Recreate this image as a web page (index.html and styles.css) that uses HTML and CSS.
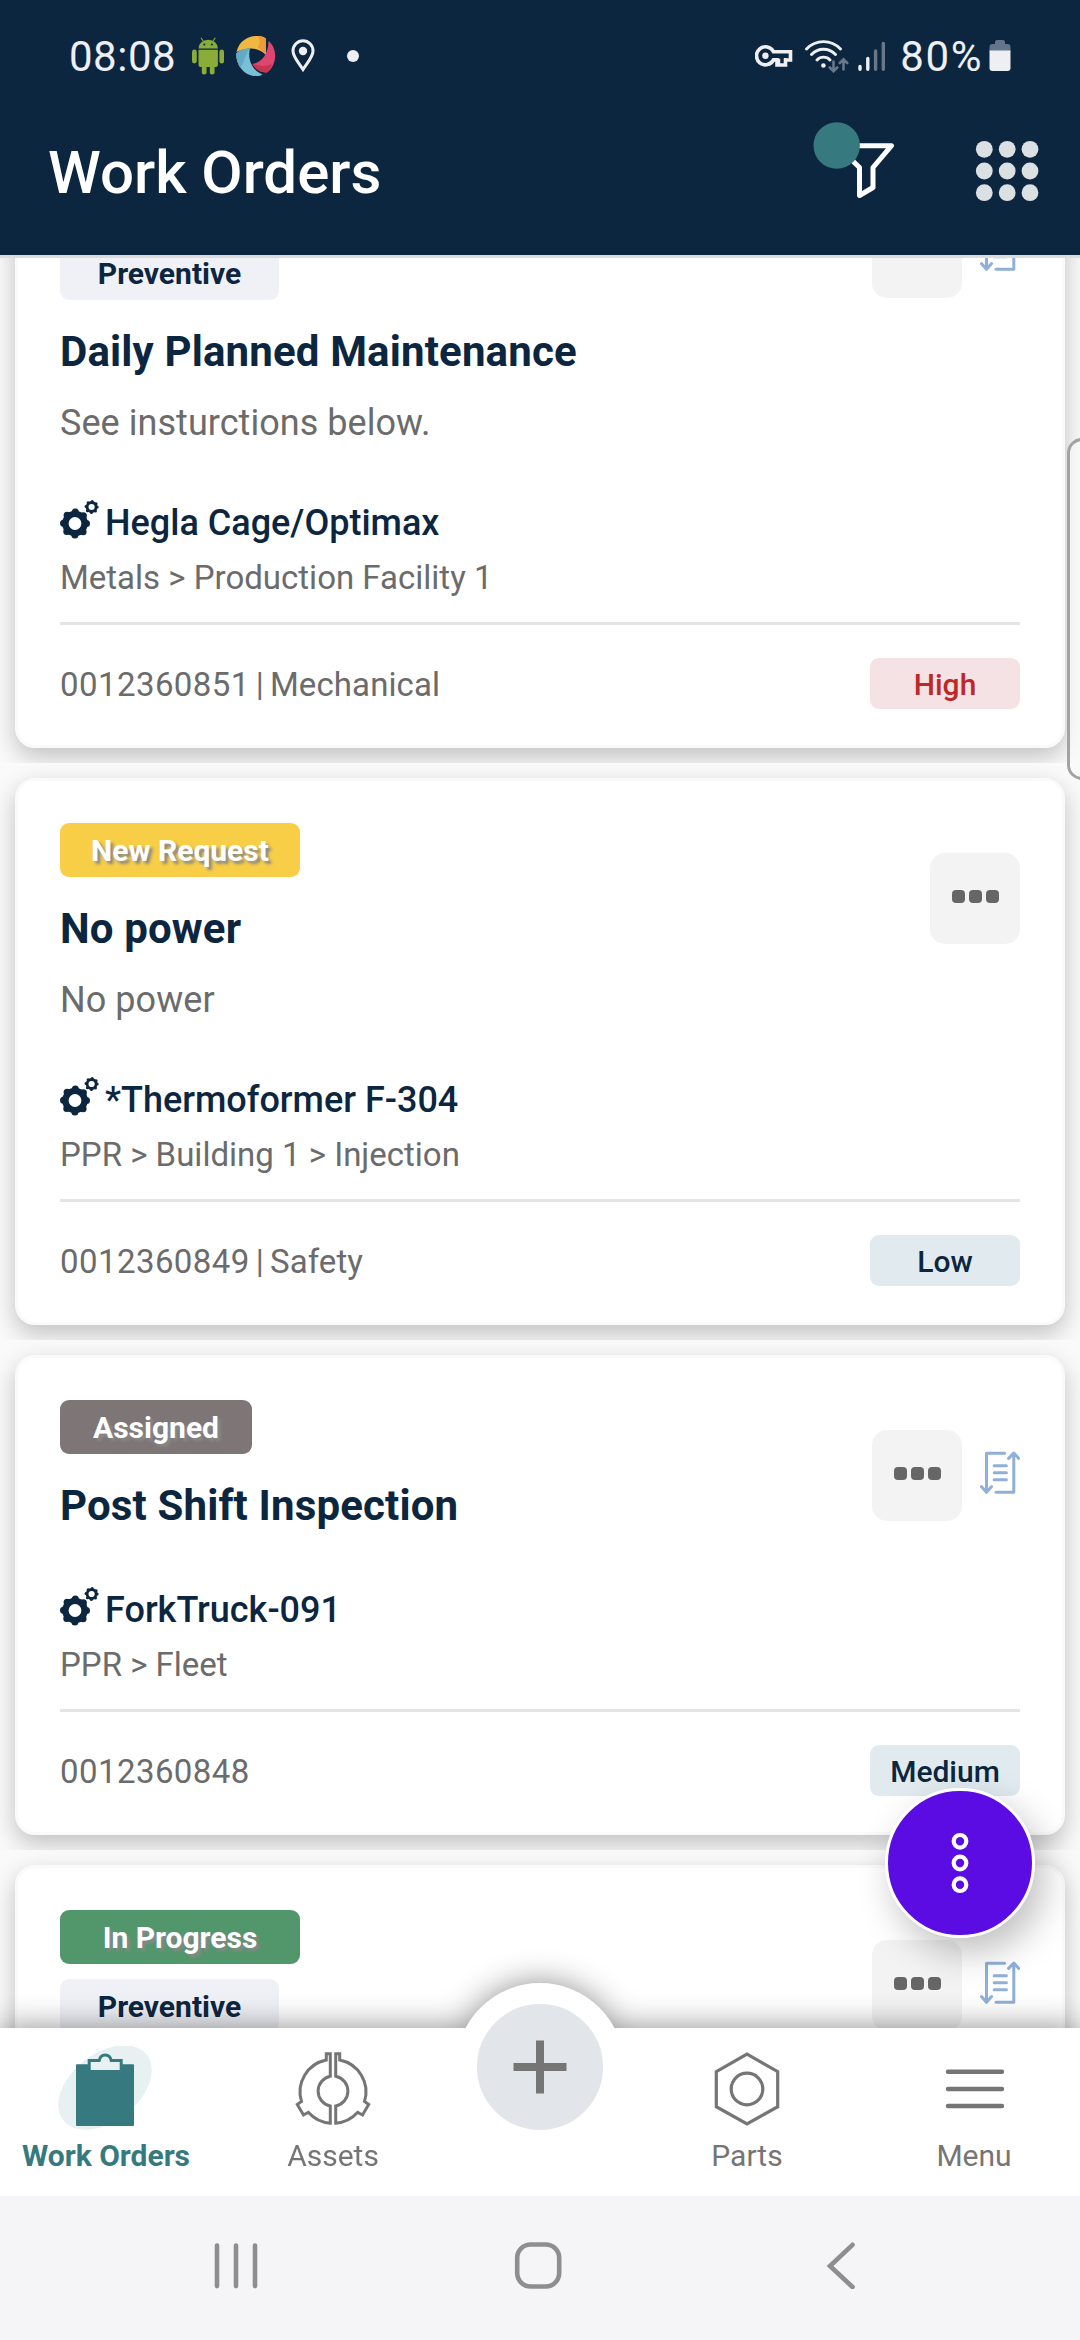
FILE: index.html
```html
<!DOCTYPE html>
<html lang="en">
<head>
<meta charset="utf-8">
<title>Work Orders</title>
<link rel="stylesheet" href="styles.css">
</head>
<body>
<svg class="defs" width="0" height="0" aria-hidden="true">
  <symbol id="gears" viewBox="0 0 39 40">
    <g fill="none" stroke="#0d2640">
      <circle cx="15" cy="24.5" r="9.6" stroke-width="6.4"/>
      <circle cx="15" cy="24.5" r="11.5" stroke-width="7" stroke-linecap="round" stroke-dasharray="0 9.032"/>
      <circle cx="31.6" cy="8" r="4.5" stroke-width="2.8"/>
      <circle cx="31.6" cy="8" r="5.6" stroke-width="3" stroke-linecap="round" stroke-dasharray="0 4.398"/>
    </g>
  </symbol>
  <symbol id="procedure" viewBox="0 0 40 43">
    <path d="M24.6 2.2H6.5V41.3M1.4 35.6L6.5 41.3L11.6 35.6M16 41.2H33.8V2.2M28.6 7.4L33.8 2L38.8 7.4M14.2 14.7H26.4M14.2 21.7H26.4M14.2 28.7H26.4" fill="none" stroke="#90b0d6" stroke-width="3" stroke-linecap="round" stroke-linejoin="round"/>
  </symbol>
</svg>

<div class="screen">
  <div class="statusbar">
    <div class="status-left">
      <span class="clock">08:08</span>
      <svg class="i-android" width="32" height="38" viewBox="0 0 32 38" fill="#8aac38">
        <path d="M6.5 11.5a9.7 8.7 0 0 1 19.4 0z"/>
        <path d="M9 .8l2.6 4M23.300 .8l-2.600 4" stroke="#8aac38" stroke-width="1.1" fill="none"/>
        <path d="M6.500 12.700h19.400v15.300a2 2 0 0 1-2 2H8.500a2 2 0 0 1-2-2z"/>
        <rect x="0" y="12.500" width="4.800" height="14" rx="2.400"/><rect x="27.400" y="12.500" width="4.600" height="14" rx="2.300"/>
        <rect x="9.800" y="26" width="4.800" height="11.500" rx="2.200"/><rect x="17.800" y="26" width="4.800" height="11.500" rx="2.200"/>
        <circle cx="12.300" cy="7.600" r="1" fill="#0d2640"/><circle cx="19.900" cy="7.600" r="1" fill="#0d2640"/>
      </svg>
      <svg class="i-swirl" width="40" height="40" viewBox="0 0 40 40">
        <path d="M.5 16C3 5 12 0 20 0c4 0 7.500.600 9.800 2.500V19C26 14 16 9 .5 16z" fill="#f0b840"/>
        <path d="M22 0c3 0 6 .8 7.800 2.500V19c-1.500-3-5-6-8-7.500 2-3 2.500-8 .2-11.500z" fill="#ee9a3a"/>
        <path d="M32.500 5C39 10 41 20 37.500 28c-1.500 4-4 7-6.500 8.500-6 .500-12-3.500-14.500-8.500 8-1 16-9 16-23z" fill="#dc4670"/>
        <path d="M36 28c-6 3-12 2-19.500 0 2.500 5 8.500 9 14.500 8.500 2-1.500 4-5 5-8.500z" fill="#c8364e"/>
        <path d="M14 12.500C8 12.500 3 14.500.3 17.500 0 28 7 39.500 20 40c3 0 5-.5 6.500-1.500C17 35 11 24 14 12.500z" fill="#79bfd6"/>
        <path d="M14 12.500C8 12.500 3 14.500.3 17.500c-.2 5 1.200 9.500 3.500 13.500C9 29 8 18 14 12.500z" fill="#63aac6"/>
      </svg>
      <svg class="i-pin" width="24" height="34" viewBox="0 0 24 34">
        <path d="M12 30.500C8 24 2 18 2 12a10 10.200 0 0 1 20 0c0 6-6 12-10 18.500z" fill="none" stroke="#eeeff2" stroke-width="3"/>
        <circle cx="12" cy="12" r="4.200" fill="#eeeff2"/>
      </svg>
      <span class="status-dot"></span>
    </div>
    <div class="status-right">
      <svg width="38" height="24" viewBox="0 0 38 24">
        <path d="M18.500 7.700A9 9 0 1 0 18.500 15.900H22V21h8.500v-5H35.500V7.700z" fill="none" stroke="#eeeff2" stroke-width="3.600"/>
        <path d="M21.500 15.900H24V20M30.300 20V14" fill="none" stroke="#eeeff2" stroke-width="2.500"/>
        <circle cx="10.400" cy="11.800" r="3.200" fill="#eeeff2"/>
      </svg>
      <svg class="i-wifi" width="44" height="34" viewBox="0 0 44 34" fill="none" stroke-linecap="round">
        <path d="M1.500 10C11 .2 26 .2 35.500 10M6.500 15.500C13 8.500 24 8.500 30.500 15.500M12 21c3.500-3.800 9.500-3.800 13 0" stroke="#eeeff2" stroke-width="2.900"/>
        <circle cx="18.400" cy="26.500" r="2.300" fill="#eeeff2"/>
        <path d="M28.500 22.500v9.500M24.800 28.500l3.700 3.700 3.700-3.700M38.500 30.500v-9.500M34.800 24l3.700-3.700 3.700 3.700" stroke="#68778a" stroke-width="2.600"/>
      </svg>
      <svg class="i-signal" width="28" height="31" viewBox="0 0 28 31" fill="none" stroke-width="3.400" stroke-linecap="round">
        <path d="M2 25.500v2.700M9.800 17.500v10.700" stroke="#eeeff2"/>
        <path d="M17.600 10v18.200M25.300 2.500v25.700" stroke="#68778a"/>
      </svg>
      <span class="battery-text">80%</span>
      <svg class="i-battery" width="22" height="32" viewBox="0 0 22 32">
        <path d="M6 2a2 2 0 0 1 2-2h6a2 2 0 0 1 2 2v2h2.500a3 3 0 0 1 3 3v4H.5V7a3 3 0 0 1 3-3H6z" fill="#64748a"/>
        <path d="M.5 10.500h21V28a3 3 0 0 1-3 3h-15a3 3 0 0 1-3-3z" fill="#eeeff2"/>
      </svg>
    </div>
  </div>

  <header class="appbar">
    <h1>Work Orders</h1>
    <svg class="i-filter" width="82" height="100" viewBox="0 0 82 100">
      <path d="M24 24.700H78.500L60 46.500V66.500L46.500 74.500V46.500z" fill="none" stroke="#fff" stroke-width="5" stroke-linejoin="round"/>
      <circle cx="23.700" cy="24.500" r="23.200" fill="#367a7f"/>
    </svg>
    <svg width="64" height="64" viewBox="0 0 64 64" fill="#dbe0e2">
      <circle cx="9.300" cy="10.300" r="8.400"/><circle cx="32.200" cy="10.300" r="8.400"/><circle cx="55" cy="10.300" r="8.400"/>
      <circle cx="9.300" cy="32" r="8.400"/><circle cx="32.200" cy="32" r="8.400"/><circle cx="55" cy="32" r="8.400"/>
      <circle cx="9.300" cy="53.700" r="8.400"/><circle cx="32.200" cy="53.700" r="8.400"/><circle cx="55" cy="53.700" r="8.400"/>
    </svg>
  </header>

  <main class="list">
    <div class="items">
      <div class="item"><article class="card">
        <div class="card-head">
          <div class="card-info">
            <span class="badge progress"></span>
            <span class="badge type">Preventive</span>
            <h2>Daily Planned Maintenance</h2>
          </div>
          <div class="actions">
            <button class="more"><i></i><i></i><i></i></button>
            <svg width="40" height="43"><use href="#procedure"/></svg>
          </div>
        </div>
        <p class="desc">See insturctions below.</p>
        <div class="asset"><svg width="39" height="40"><use href="#gears"/></svg><span>Hegla Cage/Optimax</span></div>
        <p class="path">Metals &gt; Production Facility 1</p>
        <div class="card-foot"><div class="code"><span class="num">0012360851</span><span>|</span><span>Mechanical</span></div><span class="chip high">High</span></div>
      </article></div>

      <div class="item"><article class="card">
        <div class="card-head">
          <div class="card-info">
            <span class="badge new">New Request</span>
            <h2>No power</h2>
          </div>
          <div class="actions">
            <button class="more"><i></i><i></i><i></i></button>
          </div>
        </div>
        <p class="desc">No power</p>
        <div class="asset"><svg width="39" height="40"><use href="#gears"/></svg><span>*Thermoformer F-304</span></div>
        <p class="path">PPR &gt; Building 1 &gt; Injection</p>
        <div class="card-foot"><div class="code"><span class="num">0012360849</span><span>|</span><span>Safety</span></div><span class="chip">Low</span></div>
      </article></div>

      <div class="item"><article class="card">
        <div class="card-head">
          <div class="card-info">
            <span class="badge assigned">Assigned</span>
            <h2>Post Shift Inspection</h2>
          </div>
          <div class="actions">
            <button class="more"><i></i><i></i><i></i></button>
            <svg width="40" height="43"><use href="#procedure"/></svg>
          </div>
        </div>
        <div class="asset"><svg width="39" height="40"><use href="#gears"/></svg><span>ForkTruck-091</span></div>
        <p class="path">PPR &gt; Fleet</p>
        <div class="card-foot"><div class="code"><span class="num">0012360848</span></div><span class="chip">Medium</span></div>
      </article></div>

      <div class="item"><article class="card">
        <div class="card-head">
          <div class="card-info">
            <span class="badge progress">In Progress</span>
            <span class="badge type">Preventive</span>
          </div>
          <div class="actions">
            <button class="more"><i></i><i></i><i></i></button>
            <svg width="40" height="43"><use href="#procedure"/></svg>
          </div>
        </div>
      </article></div>
    </div>
    <div class="edge-handle"></div>
    <button class="fab">
      <svg width="18" height="62" viewBox="0 0 18 62" fill="none" stroke="#fff" stroke-width="4.200"><circle cx="9" cy="9.300" r="6.300"/><circle cx="9" cy="31" r="6.300"/><circle cx="9" cy="52.700" r="6.300"/></svg>
    </button>
  </main>

  <nav class="tabbar">
    <a class="tab active">
      <svg width="100" height="84" viewBox="0 0 100 84">
        <ellipse cx="49" cy="41.500" rx="53" ry="34" transform="rotate(-38 49 41.500)" fill="#e7f1f2"/>
        <rect x="20" y="18.300" width="58" height="61.700" rx="1" fill="#367a7f"/>
        <path d="M33.200 24V14.500H43.200A6.200 7.200 0 0 1 55.200 14.500H65.200V24z" fill="#e7f1f2"/>
        <path d="M33.200 24V14.500H43.200A6.200 7.200 0 0 1 55.200 14.500H65.200V24" fill="none" stroke="#367a7f" stroke-width="3"/>
      </svg>
      <span>Work Orders</span>
    </a>
    <a class="tab">
      <svg width="100" height="84" viewBox="0 0 100 84" fill="none" stroke="#757575" stroke-width="3">
        <path id="half" d="M47.300 30.200V7.800H43.300V14A32.500 32.500 0 0 0 18.500 55.500L14.300 58.500L20.500 69L25.300 66.300A32.500 32.500 0 0 0 47.300 77.200V60A15.200 15.200 0 0 1 47.300 30.200z"/>
        <use href="#half" transform="matrix(-1 0 0 1 100 0)"/>
      </svg>
      <span>Assets</span>
    </a>
    <button class="add"><svg width="54" height="54" viewBox="0 0 54 54"><path d="M27 .5v53M.5 27h53" stroke="#757575" stroke-width="8"/></svg></button>
    <a class="tab">
      <svg width="100" height="84" viewBox="0 0 100 84" fill="none" stroke="#757575" stroke-width="3.200">
        <path d="M50 8.200L80.700 25.700V60.700L50 78L19.300 60.700V25.700z"/><circle cx="50" cy="43" r="15.800"/>
      </svg>
      <span>Parts</span>
    </a>
    <a class="tab">
      <svg width="100" height="84" viewBox="0 0 100 84" fill="none" stroke="#757575" stroke-width="4.400" stroke-linecap="round">
        <path d="M24 25.700H78M24 43H78M24 60H78"/>
      </svg>
      <span>Menu</span>
    </a>
  </nav>

  <div class="sysnav">
    <svg width="48" height="48" viewBox="0 0 48 48" fill="none" stroke="#8e8e8e" stroke-width="4.600" stroke-linecap="round"><path d="M5 4.500v40.600M24 4.500v40.600M43 4.500v40.600"/></svg>
    <svg width="48" height="48" viewBox="0 0 48 48" fill="none" stroke="#8e8e8e" stroke-width="4.600"><rect x="3.200" y="3.500" width="42" height="42" rx="13.500"/></svg>
    <svg width="48" height="48" viewBox="0 0 48 48" fill="none" stroke="#8e8e8e" stroke-width="4.600" stroke-linecap="round"><path d="M36.500 3.800L14 25L36.500 46"/></svg>
  </div>
</div>
</body>
</html>
```
FILE: styles.css
```css
* { box-sizing: border-box; margin: 0; padding: 0; }
html, body { width: 1080px; height: 2340px; overflow: hidden; }
body { font-family: Roboto, "Noto Sans", sans-serif; background: #fafafa; color: #0d2640; }
svg { display: block; flex: none; }
button { border: 0; font: inherit; }
.defs { position: absolute; }

.screen { display: flex; flex-direction: column; height: 2340px; }

.statusbar { flex: none; height: 111px; padding: 0 69px 0 69px; display: flex; justify-content: space-between; background: #0d2640; color: #eeeff2; }
.status-left, .status-right { display: flex; align-items: center; height: 112px; }
.clock { font-size: 42px; letter-spacing: .5px; }
.battery-text { margin-left: 14px; font-size: 42px; letter-spacing: 1.6px; }
.i-android { margin-left: 16px; }
.i-swirl { margin-left: 12px; }
.i-pin { margin-left: 15px; }
.status-dot { width: 12px; height: 12px; margin-left: 32px; border-radius: 50%; background: #eeeff2; }
.i-wifi { margin-left: 12px; }
.i-signal { margin-left: 9px; }
.i-battery { margin-left: 6px; }

.appbar { flex: none; height: 147px; padding: 0 41px 24px 48px; display: flex; align-items: center; background: #0d2640; border-bottom: 3px solid #dcdcdd; }
.appbar h1 { flex: 1; padding-top: 4px; font-size: 60px; line-height: 60px; font-weight: 500; color: #fff; }
.i-filter { margin-right: 80px; }

.list { position: relative; flex: 1; min-height: 0; overflow: hidden; }
.items { margin-top: -141px; }
.item { padding: 15px; background: #fafafa; }
.card { padding: 42px 42px 36px; background: #fff; border: 3px solid #fafafa; border-radius: 20px; box-shadow: 0 9px 24px rgba(0, 0, 0, .23); }
.card-head { display: flex; justify-content: space-between; align-items: flex-start; }
.card-info { display: flex; flex-direction: column; align-items: flex-start; }
.badge { height: 54px; border-radius: 9px; font-size: 30px; line-height: 55px; font-weight: 700; text-align: center; white-space: nowrap; color: #fff; text-shadow: 3px 3px 3px #888; }
.badge + .badge { margin-top: 15px; }
.badge.new { width: 240px; background: #f8ce46; }
.badge.assigned { width: 192px; background: #7e7676; }
.badge.progress { width: 240px; background: #52976b; }
.badge.type { width: 219px; background: #f0f1f6; color: #0d2640; text-shadow: none; }
.card h2 { margin-top: 22px; font-size: 42px; line-height: 60px; font-weight: 700; letter-spacing: .15px; }
.actions { display: flex; align-items: center; gap: 18px; margin-top: 30px; }
.more { display: flex; justify-content: center; gap: 4px; width: 90px; height: 91px; padding-top: 37px; border-radius: 15px; background: #f3f3f3; }
.more i { width: 13px; height: 13px; border-radius: 4px; background: #666; }
.actions > svg { margin-top: -7px; }
.desc { margin-top: 17px; padding-bottom: 2px; font-size: 36px; line-height: 48px; letter-spacing: .05px; color: #6b6b6b; }
.asset { display: flex; gap: 6px; height: 48px; margin-top: 50px; font-size: 36px; line-height: 48px; font-weight: 500; }
.path { margin-top: 10px; font-size: 33px; line-height: 42px; color: #6b6b6b; }
.card-foot { display: flex; justify-content: space-between; margin-top: 23px; padding-top: 33px; border-top: 3px solid #e4e4e4; }
.code { display: flex; gap: 6px; height: 51px; font-size: 33px; line-height: 53px; letter-spacing: .1px; color: #6b6b6b; }
.num { letter-spacing: .43px; }
.chip { width: 150px; height: 51px; border-radius: 9px; background: #e1ebef; font-size: 30px; line-height: 53px; font-weight: 500; text-align: center; }
.chip.high { background: #f5e2e4; color: #be2828; }

.edge-handle { position: absolute; top: 180px; left: 1067px; width: 40px; height: 342px; border: 3px solid #a3a3a3; border-radius: 15px; background: rgba(250, 250, 250, .6); }
.fab { position: absolute; top: 1530px; left: 885px; width: 150px; height: 150px; display: grid; place-items: center; border: 3px solid #fff; border-radius: 50%; background: #5a0ce2; box-shadow: 9px 15px 36px rgba(0, 0, 0, .25); }

.tabbar { position: relative; flex: none; height: 168px; display: grid; grid-template-columns: 212px 242px 172px 242px 212px; background: #fff; filter: drop-shadow(0 0 16px rgba(0, 0, 0, .45)); }
.tab { display: flex; flex-direction: column; align-items: center; gap: 8px; padding-top: 18px; font-size: 30px; line-height: 36px; color: #757575; }
.tab span { white-space: nowrap; }
.tab.active { color: #367a7f; font-weight: 700; }
.add { width: 168px; height: 168px; margin: -45px 2px 0; display: grid; place-items: center; border: 21px solid #fff; border-radius: 50%; background: #e2e6eb; }
.sysnav { position: relative; flex: none; height: 144px; padding: 45px 0 0 212px; display: flex; gap: 254px; background: #f5f5f8; }
```
